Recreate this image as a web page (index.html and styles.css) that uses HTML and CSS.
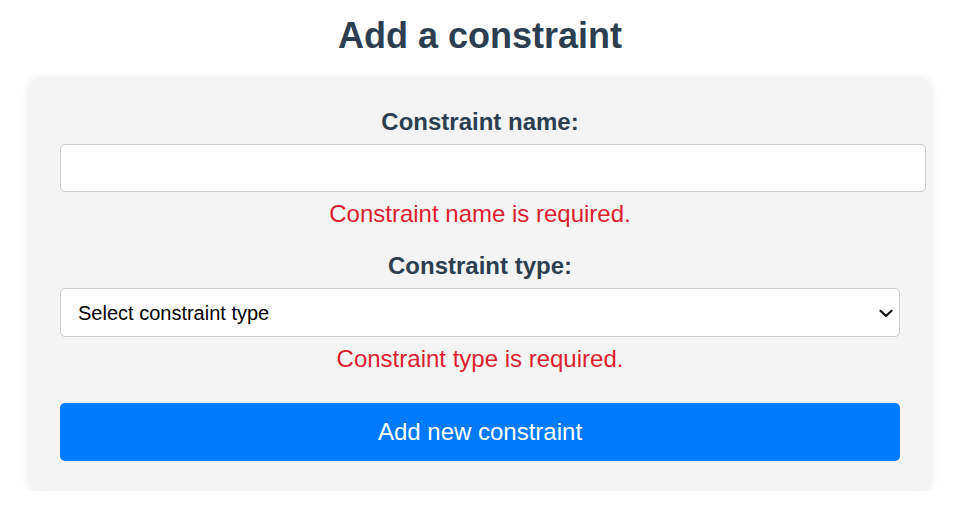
FILE: index.html
```html
<!DOCTYPE html>
<html lang="en">
<head>
<meta charset="utf-8">
<title>Add a constraint</title>
<link rel="stylesheet" href="styles.css">
</head>
<body>
<div class="page">
  <h1 class="title">Add a constraint</h1>
  <form class="card">
    <div class="field">
      <label class="label" for="cname">Constraint name:</label>
      <input class="text-input" id="cname" type="text">
      <p class="error">Constraint name is required.</p>
    </div>
    <div class="field">
      <label class="label" for="ctype">Constraint type:</label>
      <div class="select-wrap">
        <select class="select" id="ctype">
          <option>Select constraint type</option>
        </select>
        <svg class="chevron" width="14" height="9" viewBox="0 0 14 9" aria-hidden="true">
          <path d="M1.5 1.8 L7 7 L12.5 1.8" fill="none" stroke="#111111" stroke-width="2.2" stroke-linecap="round" stroke-linejoin="round"/>
        </svg>
      </div>
      <p class="error">Constraint type is required.</p>
    </div>
    <button class="submit" type="button">Add new constraint</button>
  </form>
</div>
</body>
</html>
```

FILE: styles.css
```css
html, body {
  margin: 0;
  padding: 0;
  background: #ffffff;
}
body {
  font-family: "Liberation Sans", Arial, sans-serif;
}
.page {
  width: 900px;
  margin: 0 30px;
}
.title {
  margin: 15px 0 22px;
  font-size: 36px;
  line-height: 41px;
  font-weight: bold;
  color: #2c3e50;
  text-align: center;
}
.card {
  display: flex;
  flex-direction: column;
  background: #f4f4f4;
  border-radius: 12px;
  box-shadow: 0 1px 10px rgba(0, 0, 0, 0.12);
  padding: 30px 30px 30px;
}
.field {
  display: flex;
  flex-direction: column;
  align-items: flex-start;
}
.field + .field {
  margin-top: 25px;
}
.label {
  align-self: stretch;
  text-align: center;
  font-size: 24px;
  line-height: 27px;
  font-weight: bold;
  color: #2c3e50;
  margin-bottom: 9px;
}
.text-input {
  box-sizing: content-box;
  width: 840px;
  height: 22px;
  padding: 12px;
  margin: 0;
  border: 1px solid #cccccc;
  border-radius: 5px;
  background: #ffffff;
  font-family: "Liberation Sans", Arial, sans-serif;
  font-size: 20px;
}
.select-wrap {
  position: relative;
  width: 840px;
  height: 49px;
}
.select {
  -webkit-appearance: none;
  appearance: none;
  box-sizing: border-box;
  width: 840px;
  height: 49px;
  padding: 0 40px 0 17px;
  margin: 0;
  border: 1px solid #cccccc;
  border-radius: 5px;
  background-color: #ffffff;
  color: #000000;
  font-family: "Liberation Sans", Arial, sans-serif;
  font-size: 20px;
}
.chevron {
  position: absolute;
  right: 7px;
  top: 21px;
  pointer-events: none;
}
.error {
  align-self: stretch;
  margin: 8px 0 0;
  text-align: center;
  font-size: 24px;
  line-height: 27px;
  color: #dc1f30;
}
.submit {
  margin-top: 31px;
  width: 840px;
  height: 58px;
  border: none;
  border-radius: 5px;
  background: #007bff;
  color: #ffffff;
  font-family: "Liberation Sans", Arial, sans-serif;
  font-size: 24px;
  padding: 0;
  cursor: pointer;
}
```
